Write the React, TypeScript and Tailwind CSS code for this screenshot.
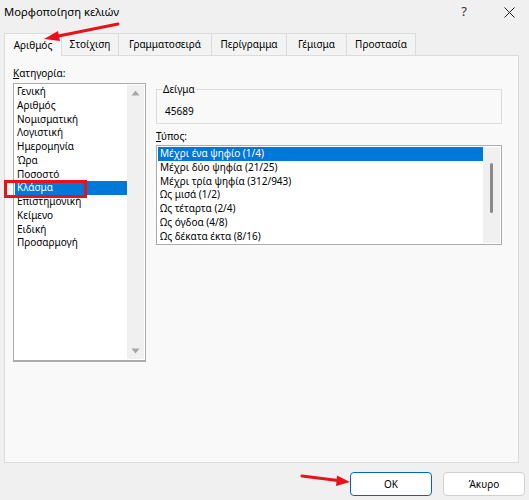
const categories = [
  "Γενική",
  "Αριθμός",
  "Νομισματική",
  "Λογιστική",
  "Ημερομηνία",
  "Ώρα",
  "Ποσοστό",
  "Κλάσμα",
  "Επιστημονική",
  "Κείμενο",
  "Ειδική",
  "Προσαρμογή",
];

const types = [
  "Μέχρι ένα ψηφίο (1/4)",
  "Μέχρι δύο ψηφία (21/25)",
  "Μέχρι τρία ψηφία (312/943)",
  "Ως μισά (1/2)",
  "Ως τέταρτα (2/4)",
  "Ως όγδοα (4/8)",
  "Ως δέκατα έκτα (8/16)",
];

const tabs = [
  { label: "Αριθμός", w: "w-[58px]" },
  { label: "Στοίχιση", w: "w-[57px]" },
  { label: "Γραμματοσειρά", w: "w-[93px]" },
  { label: "Περίγραμμα", w: "w-[75px]" },
  { label: "Γέμισμα", w: "w-[60px]" },
  { label: "Προστασία", w: "w-[69px]" },
];

const UpArrow = () => (
  <svg width="9" height="6" viewBox="0 0 9 6">
    <path d="M0.5 5.5 L4.5 0.5 L8.5 5.5 Z" fill="#a6a6a6" />
  </svg>
);

const DownArrow = () => (
  <svg width="9" height="6" viewBox="0 0 9 6">
    <path d="M0.5 0.5 L4.5 5.5 L8.5 0.5 Z" fill="#a6a6a6" />
  </svg>
);

export default function App() {
  return (
    <div className="relative w-[529px] h-[500px] bg-[#f0f0f0] text-[10px] text-black overflow-hidden font-['Noto_Sans',sans-serif]">
      {/* title bar */}
      <div className="flex items-center h-[24px] pl-[4px] pr-[14px]">
        <span className="text-[11.25px]">Μορφοποίηση κελιών</span>
        <span className="ml-auto text-[13px] text-[#333]">?</span>
        <svg className="ml-[37px]" width="11" height="11" viewBox="0 0 11 11">
          <path d="M0.5 0.5 L10.5 10.5 M10.5 0.5 L0.5 10.5" stroke="#222" strokeWidth="1" />
        </svg>
      </div>

      {/* tabs */}
      <div className="flex items-end mt-[9px] pl-[4px] h-[22px]">
        {tabs.map((t, i) => (
          <div
            key={t.label}
            className={
              i === 0
                ? `${t.w} h-[23px] -mb-px relative z-10 flex items-center justify-center bg-[#f9f9f9] border border-b-0 border-[#dcdcdc]`
                : `${t.w} h-[22px] flex items-center justify-center bg-[#f3f3f3] border border-l-0 border-b-0 border-[#dcdcdc]`
            }
          >
            {t.label}
          </div>
        ))}
      </div>

      {/* panel */}
      <div className="mx-[4px] w-[515px] h-[408px] bg-[#f9f9f9] border border-[#dcdcdc] flex pl-[8px] pt-[9px]">
        {/* left column */}
        <div className="w-[133px] flex flex-col">
          <div className="h-[16px] leading-[16px] mb-[2px]">
            <span className="underline">Κ</span>ατηγορία:
          </div>
          <div className="h-[279px] bg-white border border-[#acacac] border-b-2 flex p-px">
            <div className="flex-1 flex flex-col">
              {categories.map((c) => (
                <div
                  key={c}
                  className={
                    c === "Κλάσμα"
                      ? "h-[13.75px] leading-[13.75px] pl-[2px] bg-[#0078d7] text-white"
                      : "h-[13.75px] leading-[13.75px] pl-[2px]"
                  }
                >
                  {c}
                </div>
              ))}
            </div>
            <div className="w-[17px] bg-[#f0f0f0] flex flex-col items-center justify-between pt-[5px] pb-[5px]">
              <UpArrow />
              <DownArrow />
            </div>
          </div>
        </div>

        {/* right column */}
        <div className="ml-[10px] w-[346px] flex flex-col">
          <div className="relative mt-[24px] h-[35px] border border-[#dcdcdc]">
            <span className="absolute left-[5px] -top-[8px] leading-[14px] bg-[#f9f9f9] px-px">Δείγμα</span>
            <div className="pt-[13px] pl-[8px] leading-[16px]">45689</div>
          </div>
          <div className="mt-[4px] h-[16px] leading-[16px] mb-[1px]">
            <span className="underline">Τ</span>ύπος:
          </div>
          <div className="h-[100px] bg-white border border-[#acacac] flex p-px">
            <div className="flex-1 flex flex-col">
              {types.map((t, i) => (
                <div
                  key={t}
                  className={
                    i === 0
                      ? "h-[13.75px] leading-[13.75px] pl-[2px] bg-[#0078d7] text-white"
                      : "h-[13.75px] leading-[13.75px] pl-[2px]"
                  }
                >
                  {t}
                </div>
              ))}
            </div>
            <div className="w-[17px] bg-[#f0f0f0] flex justify-center pt-[16px]">
              <div className="w-[3px] h-[50px] rounded-full bg-[#8a8a8a]" />
            </div>
          </div>
        </div>
      </div>

      {/* buttons */}
      <div className="flex justify-end gap-[11px] mt-[9px] pr-[4px]">
        <button className="w-[82px] h-[24px] bg-white border border-[#0067c0] rounded-[4px]">OK</button>
        <button className="w-[82px] h-[24px] bg-white border border-[#d0d0d0] rounded-[4px]">Άκυρο</button>
      </div>

      {/* annotations */}
      <div className="absolute z-20 left-[4px] top-[180px] w-[83px] h-[18px] border-[3px] border-[#e8131a]" />
      <svg className="absolute z-20 left-0 top-0 pointer-events-none" width="529" height="500">
        <line x1="118" y1="24" x2="56" y2="36.5" stroke="#e8131a" strokeWidth="3" strokeLinecap="round" />
        <path d="M44 39 L58 31 L60 41 Z" fill="#e8131a" />
        <line x1="302" y1="476" x2="338" y2="480.5" stroke="#e8131a" strokeWidth="3" strokeLinecap="round" />
        <path d="M350 482 L337 475.5 L336 486 Z" fill="#e8131a" />
      </svg>
    </div>
  );
}
